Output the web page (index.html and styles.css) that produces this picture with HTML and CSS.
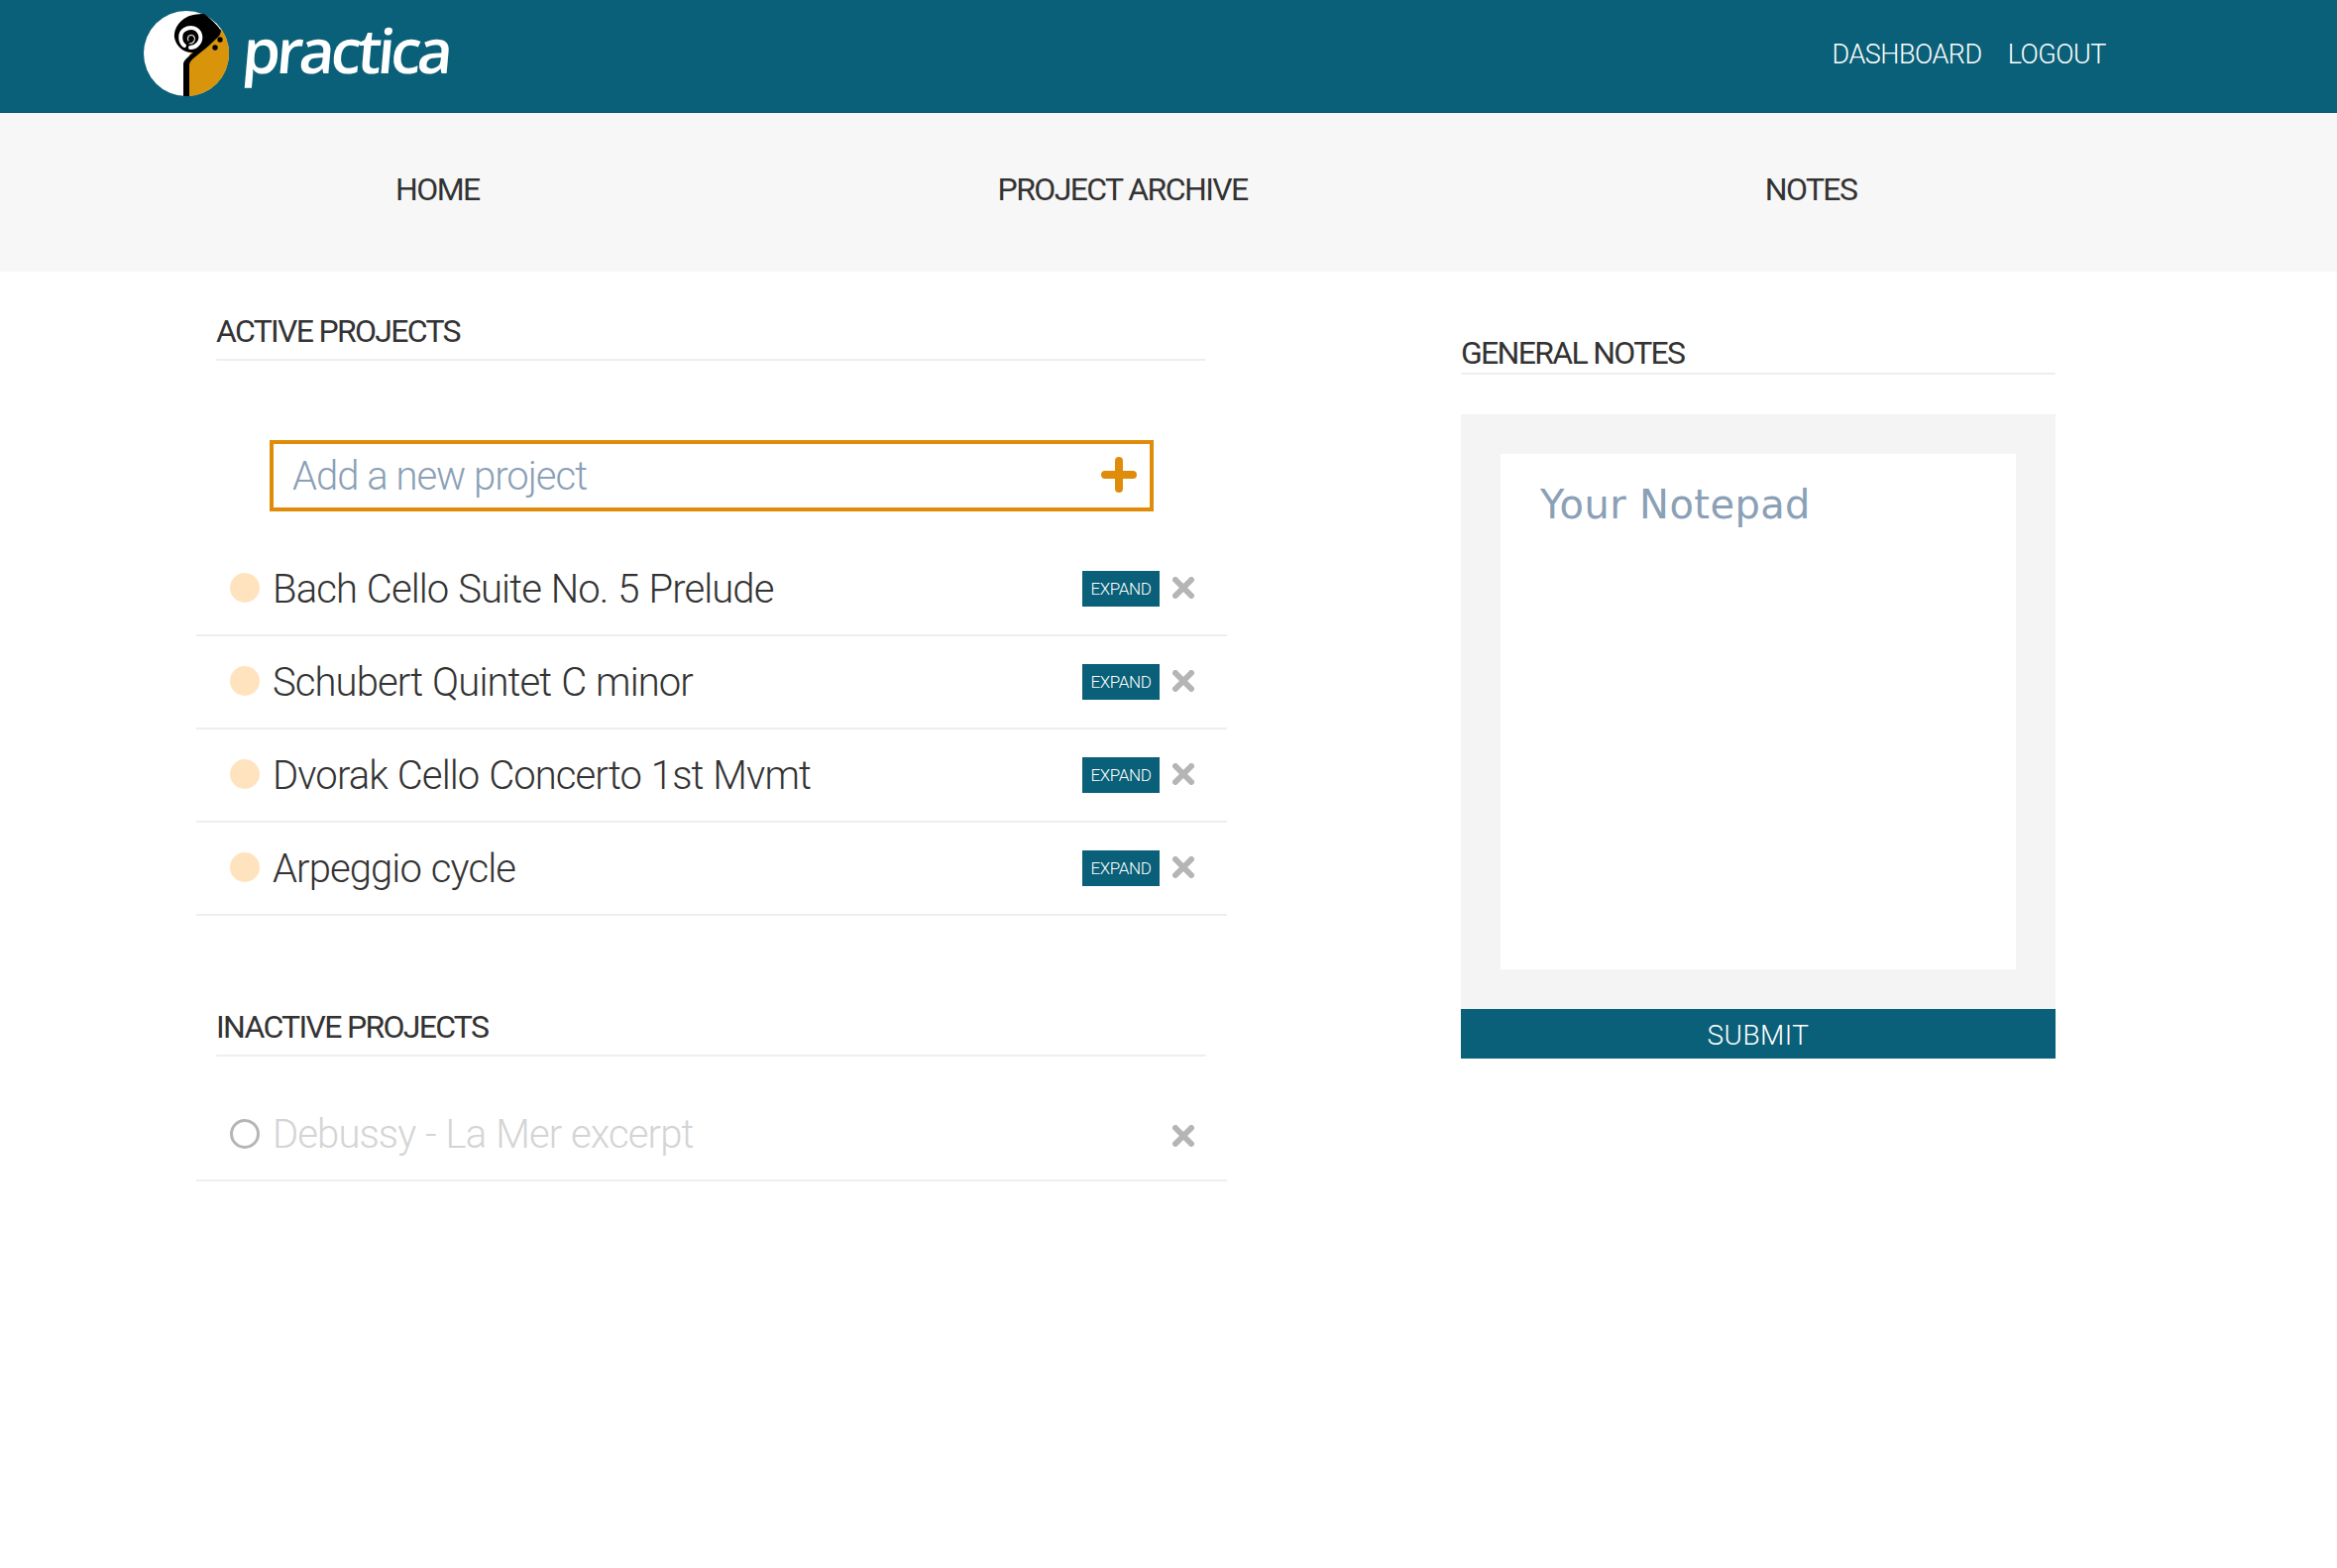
FILE: index.html
```html
<!DOCTYPE html>
<html lang="en">
<head>
  <meta charset="UTF-8">
  <title>Practica</title>
  <link rel="stylesheet" href="styles.css">
</head>
<body>
  <header class="topbar">
    <a class="brand" href="#">
      <svg class="brand-mark" viewBox="0 0 86 86" width="86" height="86">
        <circle cx="43" cy="43" r="43" fill="#fff"/>
        <path d="M46 86A43 43 0 0 0 78 18L46 44Z" fill="#d8940a"/>
        <path d="M40 86V54C40 50 44 47 50 42C42 43 33 37 31 27C30 15 40 6 50 4C54 3 58 3 61 3C68 8 74 14 78 20L77 24C68 34 56 43 50 48C47 51 46 52 46 56V86Z" fill="#000"/>
        <path d="M41 35C36 31 36 22 41 19C47 15 55 17 57 24C59 31 53 37 47 37" fill="none" stroke="#fff" stroke-width="4" stroke-linecap="round"/>
        <path d="M45 30C43 26 47 23 50 25C53 28 51 33 46 33" fill="none" stroke="#ccc" stroke-width="1.2" stroke-linecap="round"/>
        <circle cx="77" cy="29" r="2.7" fill="#000"/>
        <circle cx="72" cy="37" r="2.7" fill="#000"/>
      </svg>
      <span class="brand-name">practica</span>
    </a>
    <nav class="toplinks">
      <a href="#">DASHBOARD</a>
      <a href="#">LOGOUT</a>
    </nav>
  </header>

  <nav class="mainnav">
    <a class="nav-home" href="#">HOME</a>
    <a class="nav-archive" href="#">PROJECT ARCHIVE</a>
    <a class="nav-notes" href="#">NOTES</a>
  </nav>

  <main class="content">
    <section class="projects">
      <h2 class="section-title">ACTIVE PROJECTS</h2>
      <form class="add-project">
        <input type="text" placeholder="Add a new project">
        <svg class="plus" viewBox="0 0 36 36" width="36" height="36"><path d="M18 4V32M4 18H32" stroke="#e08c0b" stroke-width="8" stroke-linecap="round"/></svg>
      </form>
      <ul class="project-list">
        <li class="project">
          <span class="dot"></span><span class="project-name">Bach Cello Suite No. 5 Prelude</span>
          <button class="expand">EXPAND</button>
          <svg class="remove" viewBox="0 0 22 22" width="22" height="22"><path d="M3 3L19 19M19 3L3 19" stroke="#b5b5b5" stroke-width="6" stroke-linecap="round"/></svg>
        </li>
        <li class="project">
          <span class="dot"></span><span class="project-name">Schubert Quintet C minor</span>
          <button class="expand">EXPAND</button>
          <svg class="remove" viewBox="0 0 22 22" width="22" height="22"><path d="M3 3L19 19M19 3L3 19" stroke="#b5b5b5" stroke-width="6" stroke-linecap="round"/></svg>
        </li>
        <li class="project">
          <span class="dot"></span><span class="project-name">Dvorak Cello Concerto 1st Mvmt</span>
          <button class="expand">EXPAND</button>
          <svg class="remove" viewBox="0 0 22 22" width="22" height="22"><path d="M3 3L19 19M19 3L3 19" stroke="#b5b5b5" stroke-width="6" stroke-linecap="round"/></svg>
        </li>
        <li class="project">
          <span class="dot"></span><span class="project-name">Arpeggio cycle</span>
          <button class="expand">EXPAND</button>
          <svg class="remove" viewBox="0 0 22 22" width="22" height="22"><path d="M3 3L19 19M19 3L3 19" stroke="#b5b5b5" stroke-width="6" stroke-linecap="round"/></svg>
        </li>
      </ul>

      <h2 class="section-title inactive-title">INACTIVE PROJECTS</h2>
      <ul class="project-list inactive-list">
        <li class="project inactive">
          <span class="dot"></span><span class="project-name">Debussy - La Mer excerpt</span>
          <svg class="remove" viewBox="0 0 22 22" width="22" height="22"><path d="M3 3L19 19M19 3L3 19" stroke="#b5b5b5" stroke-width="6" stroke-linecap="round"/></svg>
        </li>
      </ul>
    </section>

    <section class="notes">
      <h2 class="section-title">GENERAL NOTES</h2>
      <form>
        <div class="notepad">
          <textarea placeholder="Your Notepad"></textarea>
        </div>
        <button class="submit">SUBMIT</button>
      </form>
    </section>
  </main>
</body>
</html>
```

FILE: styles.css
```css
* {
  box-sizing: border-box;
}
body {
  margin: 0;
  background: #fff;
  font-family: 'Roboto', sans-serif;
  font-weight: 300;
  color: #333;
}
a {
  color: inherit;
  text-decoration: none;
}
.topbar {
  height: 114px;
  background: #0a6078;
  display: flex;
  justify-content: space-between;
  align-items: center;
  padding: 0 233px 6px 145px;
}
.brand {
  display: flex;
  align-items: center;
  gap: 14px;
  color: #fff;
}
.brand-mark {
  display: block;
}
.brand-name {
  display: inline-block;
  margin-bottom: 8px;
  font-family: 'Open Sans', sans-serif;
  font-size: 62px;
  font-weight: 600;
  letter-spacing: -4px;
  line-height: 1;
  transform: skewX(-5deg);
}
.toplinks {
  display: flex;
  gap: 26px;
  padding-top: 2px;
  color: #fff;
  font-size: 27px;
  letter-spacing: -0.5px;
}
.mainnav {
  height: 160px;
  padding-bottom: 6px;
  background: #f7f7f7;
  display: flex;
  align-items: center;
  font-size: 32px;
  font-weight: 400;
  letter-spacing: -1.6px;
  color: #333;
}
.nav-home {
  margin-left: 399px;
}
.nav-archive {
  margin-left: 523px;
}
.nav-notes {
  margin-left: 522px;
}
.content {
  display: flex;
  align-items: flex-start;
  padding-left: 198px;
}
.projects {
  width: 1040px;
}
.notes {
  width: 600px;
  margin-left: 236px;
  padding-top: 62px;
}
.section-title {
  margin: 0;
  font-size: 32px;
  font-weight: 400;
  letter-spacing: -1.7px;
  line-height: 40px;
  color: #333;
  border-bottom: 2px solid #eee;
  border-radius: 2px;
}
.projects > .section-title {
  margin: 40px 21px 0 20px;
  padding-bottom: 8px;
}
.add-project {
  position: relative;
  width: 892px;
  margin: 80px 0 0 74px;
}
.add-project input {
  display: block;
  width: 100%;
  height: 72px;
  padding: 0 80px 0 19px;
  border: 4px solid #e08c0b;
  border-radius: 0;
  outline: none;
  font-family: 'Roboto', sans-serif;
  font-size: 40px;
  font-weight: 300;
  letter-spacing: -1px;
}
.add-project input::placeholder {
  color: #8aa0b6;
  opacity: 1;
}
.plus {
  position: absolute;
  right: 17px;
  top: 17px;
}
.project-list {
  list-style: none;
  margin: 32px 0 0;
  padding: 0;
}
.project {
  height: 94px;
  display: flex;
  align-items: center;
  padding: 0 33px 0 34px;
  border-bottom: 2px solid #eee;
}
.dot {
  flex: none;
  width: 30px;
  height: 30px;
  margin: 0 13px 2px 0;
  border-radius: 50%;
  background: #ffe3bf;
}
.project-name {
  flex: 1;
  font-size: 40px;
  letter-spacing: -0.9px;
  word-spacing: 1px;
  color: #333;
}
.expand {
  width: 78px;
  height: 36px;
  padding: 0;
  border: 0;
  background: #0a6078;
  color: #fff;
  font-family: 'Roboto', sans-serif;
  font-size: 17px;
  font-weight: 300;
  letter-spacing: -0.4px;
}
.remove {
  flex: none;
  margin: 0 0 2px 13px;
}
.projects > .inactive-title {
  margin-top: 92px;
}
.inactive-list {
  margin-top: 32px;
}
.inactive .dot {
  margin-bottom: 0;
  background: none;
  border: 3px solid #b5b5b5;
}
.inactive .remove {
  margin: 3px 0 0 13px;
}
.inactive .project-name {
  color: #d4d4d4;
}
.notepad {
  margin-top: 40px;
  padding: 40px;
  background: #f4f4f4;
}
.notepad textarea {
  display: block;
  width: 520px;
  height: 520px;
  padding: 24px 40px;
  border: 0;
  outline: none;
  resize: none;
  font-family: 'DejaVu Sans', sans-serif;
  font-size: 40px;
  letter-spacing: 0.4px;
  line-height: 54px;
}
.notepad textarea::placeholder {
  color: #8aa0b6;
  opacity: 1;
}
.submit {
  display: block;
  width: 100%;
  height: 50px;
  padding: 2px 0 0;
  border: 0;
  background: #0a6078;
  color: #fff;
  font-family: 'Roboto', sans-serif;
  font-size: 28px;
  font-weight: 300;
  letter-spacing: 0.5px;
}
```
